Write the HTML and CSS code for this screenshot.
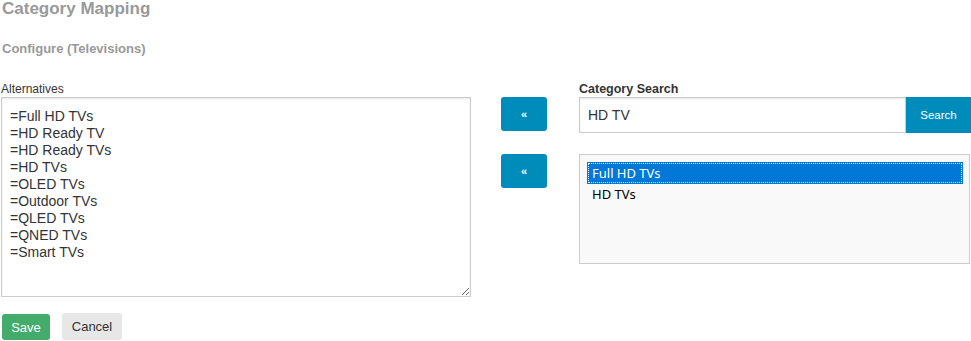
FILE: index.html
```html
<!DOCTYPE html>
<html lang="en">
<head>
<meta charset="UTF-8">
<title>Category Mapping</title>
<link rel="stylesheet" href="styles.css">
</head>
<body>

<h1 class="page-title">Category Mapping</h1>
<h2 class="sub-title">Configure (Televisions)</h2>

<div class="mapping">
    <div class="col-left">
        <label class="field-label" for="alternatives">Alternatives</label>
        <textarea id="alternatives" class="alt-box">=Full HD TVs
=HD Ready TV
=HD Ready TVs
=HD TVs
=OLED TVs
=Outdoor TVs
=QLED TVs
=QNED TVs
=Smart TVs</textarea>
    </div>

    <div class="col-mid">
        <button class="btn btn-move">&laquo;</button>
        <button class="btn btn-move">&laquo;</button>
    </div>

    <div class="col-right">
        <label class="field-label bold" for="catSearch">Category Search</label>
        <div class="search-row">
            <input type="text" id="catSearch" class="search-input" value="HD TV">
            <button class="btn btn-search">Search</button>
        </div>
        <div class="result-list">
            <div class="result-item selected">Full HD TVs</div>
            <div class="result-item">HD TVs</div>
        </div>
    </div>
</div>

<div class="actions">
    <button class="btn btn-save">Save</button>
    <button class="btn btn-cancel">Cancel</button>
</div>

</body>
</html>
```

FILE: styles.css
```css
/* page */
body {
    margin: 0;
    padding: 0 1px;
    font-family: "Liberation Sans", Arial, sans-serif;
    color: #333;
    background: #fff;
}
.page-title {
    font-size: 17px;
    font-weight: bold;
    color: #999;
    margin: 0 0 0 1px;
    line-height: 17px;
}
.sub-title {
    font-size: 13px;
    font-weight: bold;
    color: #999;
    margin: 24px 0 0 1px;
    line-height: 15px;
}

/* three columns */
.mapping {
    display: flex;
    margin-top: 26px;
}
.col-left {
    width: 470px;
}
.col-mid {
    display: flex;
    flex-direction: column;
    gap: 23px;
    margin-left: 30px;
    padding-top: 15px;
}
.col-right {
    width: 392px;
    margin-left: 32px;
}
.field-label {
    display: block;
    font-size: 12px;
    line-height: 14px;
    margin-bottom: 1px;
    color: #333;
}
.field-label.bold {
    font-weight: bold;
    font-size: 12.5px;
}

.alt-box {
    display: block;
    box-sizing: border-box;
    width: 470px;
    height: 200px;
    margin: 0;
    padding: 10px 8px 8px;
    border: 1px solid #ccc;
    box-shadow: inset 0 1px 2px rgba(0, 0, 0, 0.1);
    font-family: "Liberation Sans", Arial, sans-serif;
    font-size: 14px;
    line-height: 17px;
    color: #333;
    resize: both;
}

/* buttons */
.btn {
    border: none;
    cursor: pointer;
    font-family: "Liberation Sans", Arial, sans-serif;
}
.btn-move {
    width: 46px;
    height: 34px;
    border-radius: 3px;
    background-color: #008cba;
    color: #fff;
    font-size: 11px;
    font-weight: bold;
    padding: 0;
}
.search-row {
    display: flex;
}
.search-input {
    box-sizing: border-box;
    width: 327px;
    height: 36px;
    margin: 0;
    padding: 0 8px;
    border: 1px solid #ccc;
    box-shadow: inset 0 1px 2px rgba(0, 0, 0, 0.1);
    font-family: "Liberation Sans", Arial, sans-serif;
    font-size: 14px;
    color: #333;
}
.btn-search {
    width: 65px;
    height: 36px;
    background-color: #008cba;
    color: #fff;
    font-size: 11.5px;
    padding: 0;
}

.result-list {
    box-sizing: border-box;
    width: 391px;
    height: 110px;
    margin-top: 21px;
    padding: 8px 7px 8px 8px;
    border: 1px solid #ccc;
    background: #f9f9f9;
    font-family: "Noto Sans", "Open Sans", sans-serif;
    font-size: 13px;
    color: #000;
}
.result-item {
    height: 20px;
    line-height: 20px;
    padding-left: 4px;
    margin-bottom: 1px;
}
.result-item.selected {
    background: #0078d7;
    color: #fff;
    outline: 1px dotted #fff;
    outline-offset: -1px;
    box-shadow: 0 0 0 1px #0078d7;
}

/* bottom row */
.actions {
    display: flex;
    align-items: flex-end;
    gap: 12px;
    margin-top: 16px;
    padding-left: 1px;
}
.btn-save {
    height: 26px;
    width: 48px;
    border-radius: 3px;
    background-color: #43ac6a;
    color: #fff;
    font-size: 13px;
    padding: 0;
}
.btn-cancel {
    height: 27px;
    width: 60px;
    border-radius: 3px;
    background-color: #e7e7e7;
    color: #333;
    font-size: 13px;
    padding: 0;
}
```
